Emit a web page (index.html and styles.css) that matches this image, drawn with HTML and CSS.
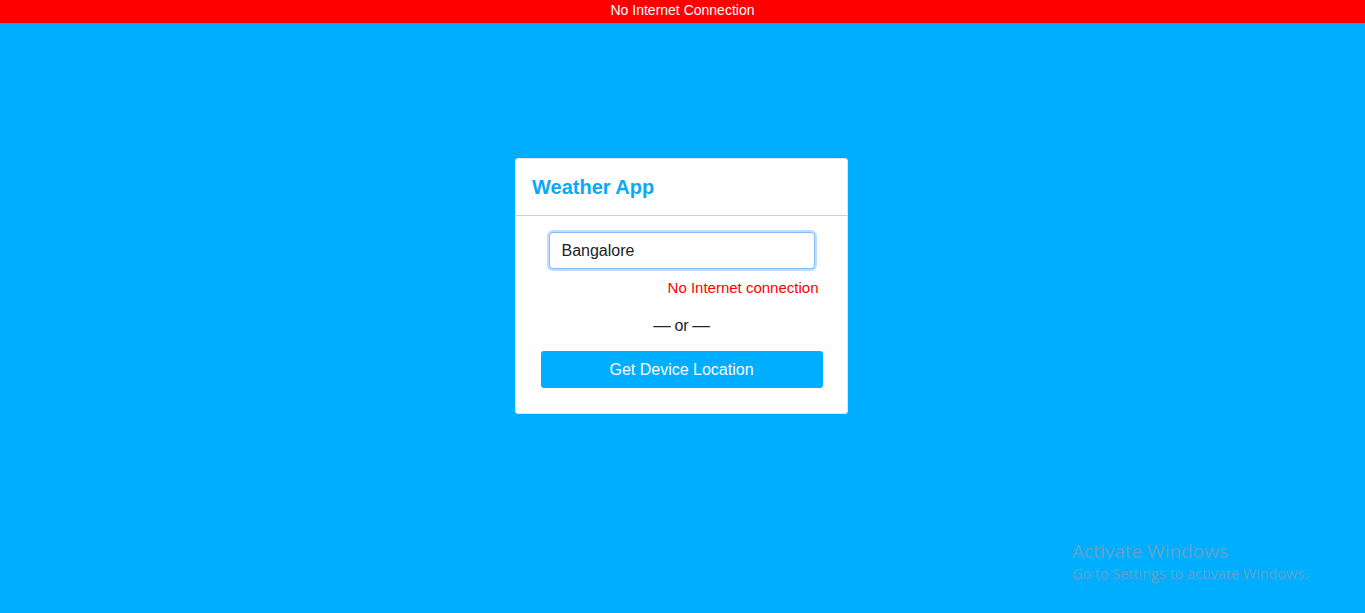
FILE: index.html
```html
<!DOCTYPE html>
<html>
<head>
<meta charset="utf-8">
<link rel="stylesheet" href="styles.css">
</head>
<body>
<div class="offline-bar">No Internet Connection</div>
<main class="page">
  <section class="card">
    <header class="card-header">
      <h1 class="title">Weather App</h1>
    </header>
    <div class="card-body">
      <div class="field">
        <input class="city-input" type="text" value="Bangalore">
        <div class="error">No Internet connection</div>
      </div>
      <div class="or"><span class="dash">—</span> or <span class="dash">—</span></div>
      <button class="locate-btn">Get Device Location</button>
    </div>
  </section>
</main>
<div class="watermark">
  <div class="wm-title">Activate Windows</div>
  <div class="wm-sub">Go to Settings to activate Windows.</div>
</div>
</body>
</html>
```
FILE: styles.css
```css
html, body {
  margin: 0;
  padding: 0;
  height: 100%;
}
body {
  background: #00aeff;
  font-family: "Liberation Sans", Arial, sans-serif;
  overflow: hidden;
}
.offline-bar {
  background: #ff0000;
  color: #fff;
  height: 23px;
  line-height: 21px;
  font-size: 14px;
  text-align: center;
}
.page {
  display: flex;
  justify-content: center;
  padding-top: 135px;
  padding-right: 2px;
}
.card {
  width: 331px;
  background: #fff;
  border: 1px solid #e4e4e4;
  border-radius: 3px;
}
.card-header {
  border-bottom: 1px solid #cfcfcf;
  padding: 16px 16px 0;
  height: 40px;
}
.title {
  margin: 0;
  font-size: 20px;
  font-weight: bold;
  color: #0aa8f5;
  line-height: 25px;
}
.card-body {
  padding: 16px 24px 25px;
  display: flex;
  flex-direction: column;
  align-items: center;
}
.field {
  display: flex;
  flex-direction: column;
  align-items: flex-end;
  width: 270px;
}
.city-input {
  box-sizing: border-box;
  width: 266px;
  height: 37px;
  margin: 0 2px;
  border: 1px solid #80bdff;
  border-radius: 4px;
  box-shadow: 0 0 0 2px #c2dcff;
  outline: none;
  padding: 0 12px;
  font-family: "Liberation Sans", Arial, sans-serif;
  font-size: 16px;
  color: #222;
}
.error {
  margin-top: 10px;
  margin-right: -2px;
  color: #ff0000;
  font-size: 15px;
  line-height: 18px;
}
.or {
  margin-top: 19px;
  font-size: 16px;
  color: #1c2533;
  line-height: 20px;
}
.dash {
  display: inline-block;
  transform: scaleX(1.1);
}
.locate-btn {
  margin-top: 15px;
  width: 282px;
  height: 37px;
  border: none;
  border-radius: 3px;
  background: #00aeff;
  color: #fff;
  font-family: "Liberation Sans", Arial, sans-serif;
  font-size: 16px;
}
.watermark {
  position: absolute;
  left: 1072px;
  top: 539px;
  color: rgba(120, 160, 190, 0.85);
  font-family: "Open Sans", "DejaVu Sans", sans-serif;
}
.wm-title {
  font-size: 19px;
  line-height: 24px;
}
.wm-sub {
  font-size: 14.4px;
  line-height: 21px;
}
```
